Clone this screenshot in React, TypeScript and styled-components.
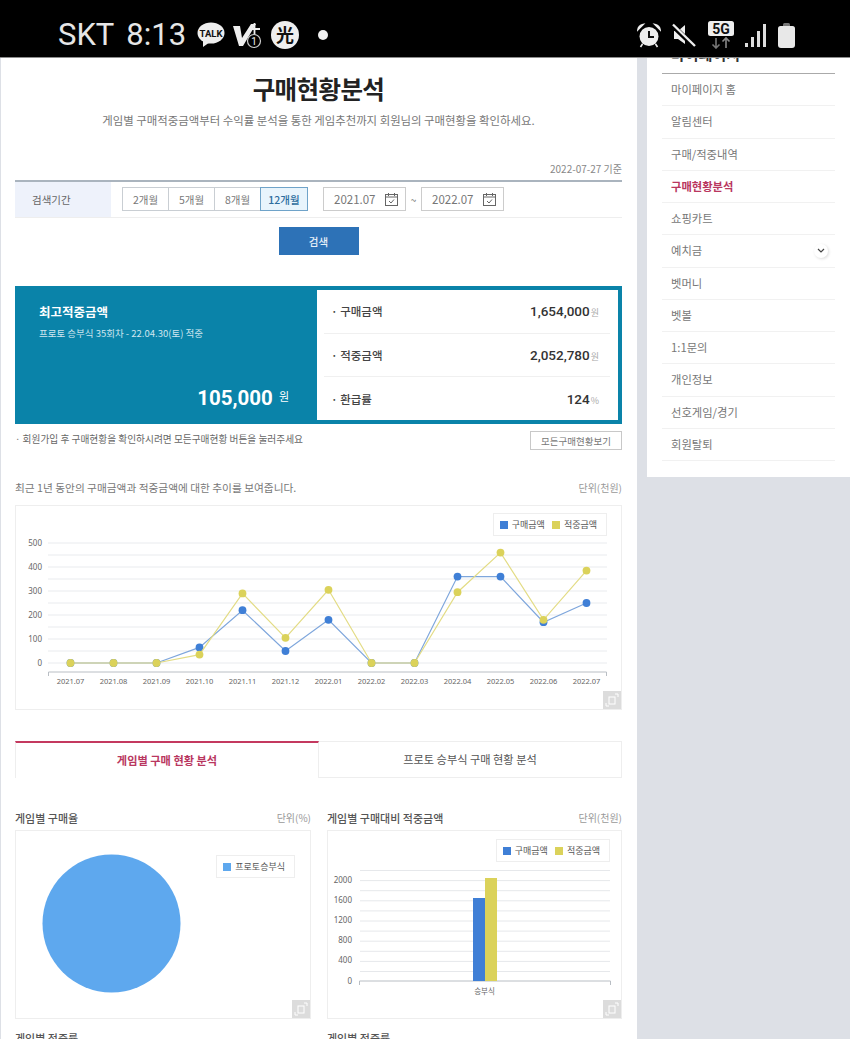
import styled, { createGlobalStyle } from "styled-components";

const GlobalStyle = createGlobalStyle`
    html, body { margin: 0; padding: 0; background: #dde0e6; }
    body { font-family: "Noto Sans CJK KR", "Noto Sans", sans-serif; color: #666; }
    * { box-sizing: border-box; }
`;

const Screen = styled.div`
    width: 850px;
    height: 1039px;
    overflow: hidden;
    background: #dde0e6;
`;

const StatusBar = styled.div`
    position: relative;
    z-index: 2;
    height: 58px;
    background: #000;
    border-bottom: 1px solid #8c8c8c;
    display: flex;
    align-items: center;
    padding: 13px 55px 0 58px;
    color: #e6e6e6;
`;

const StatusText = styled.span<{ $gap: number }>`
    font-family: Roboto, sans-serif;
    font-size: 31px;
    line-height: 36px;
    font-weight: 400;
    margin-right: ${(p) => p.$gap}px;
`;

const IconGroup = styled.div<{ $gap: number }>`
    display: flex;
    align-items: center;
    gap: ${(p) => p.$gap}px;
`;

const Dot = styled.i`
    width: 10px;
    height: 10px;
    border-radius: 50%;
    background: #f0f0f0;
    margin-left: 11px;
`;

const Spacer = styled.div`
    flex: 1;
`;

const Body = styled.div`
    display: flex;
    align-items: flex-start;
`;

const Main = styled.main`
    width: 636px;
    height: 981px;
    margin-left: 1px;
    background: #fff;
    padding: 15px 15px 0 14px;
`;

const Title = styled.h1`
    margin: 0;
    text-align: center;
    font-size: 24.5px;
    line-height: 32px;
    font-weight: 700;
    color: #222;
    letter-spacing: -0.6px;
`;

const Subtitle = styled.p`
    margin: 7px 0 0;
    text-align: center;
    font-size: 11.4px;
    line-height: 16px;
    color: #777;
`;

const BaseDate = styled.div`
    margin-top: 33px;
    text-align: right;
    font-size: 10px;
    line-height: 16px;
    color: #888;
`;

const SearchRow = styled.div`
    margin-top: 3px;
    height: 38px;
    display: flex;
    align-items: center;
    border-top: 2px solid #aab4be;
    border-bottom: 1px solid #eee;
`;

const SearchLabel = styled.div`
    width: 96px;
    height: 100%;
    padding-left: 17px;
    background: #eef2fb;
    font-size: 10.5px;
    line-height: 35px;
    color: #666;
`;

const PeriodGroup = styled.div`
    display: flex;
    margin-left: 12px;
    margin-top: -1px;
    margin-right: 15px;
`;

const PeriodButton = styled.button<{ $active?: boolean }>`
    width: ${(p) => (p.$active ? 48 : 47)}px;
    height: 24px;
    padding: 0;
    margin-left: -1px;
    position: relative;
    border: 1px solid ${(p) => (p.$active ? "#6fa3c9" : "#c9ced3")};
    background: ${(p) => (p.$active ? "#e8f4fc" : "#fff")};
    color: ${(p) => (p.$active ? "#2d6d9e" : "#777")};
    font-family: inherit;
    font-size: 10.5px;
    font-weight: ${(p) => (p.$active ? 500 : 400)};
`;

const DateField = styled.div`
    width: 83px;
    height: 24px;
    margin-top: -1px;
    padding-left: 10px;
    display: flex;
    align-items: center;
    gap: 9px;
    border: 1px solid #ccc;
    font-size: 11.5px;
    color: #777;
`;

const Tilde = styled.span`
    width: 15px;
    text-align: center;
    font-size: 10px;
    color: #777;
`;

const SearchButton = styled.button`
    display: block;
    width: 80px;
    height: 28px;
    margin: 9px auto 0;
    border: none;
    background: #2d72b7;
    color: #e8f0f8;
    font-family: inherit;
    font-size: 10.5px;
    font-weight: 500;
`;

const Highlight = styled.section`
    margin-top: 31px;
    height: 138px;
    display: flex;
    border: 4px solid #0a83a9;
    background: #0a83a9;
`;

const HighlightLeft = styled.div`
    width: 298px;
    padding: 12px 0 0 20px;
    color: #fff;
    display: flex;
    flex-direction: column;
`;

const HighlightTitle = styled.div`
    font-size: 12.5px;
    line-height: 20px;
    font-weight: 700;
`;

const HighlightSub = styled.div`
    margin-top: 3px;
    font-size: 9.5px;
    line-height: 16px;
    color: #cfe6ef;
`;

const HighlightAmount = styled.div`
    margin-top: auto;
    margin-bottom: 7px;
    padding-right: 28px;
    display: flex;
    justify-content: flex-end;
    align-items: center;
    gap: 6px;
    font-family: Roboto, sans-serif;
    font-size: 20.5px;
    line-height: 30px;
    font-weight: 700;
`;

const AmountUnit = styled.span`
    font-family: "Noto Sans CJK KR", sans-serif;
    font-size: 11px;
    font-weight: 400;
    margin-top: -4px;
`;

const HighlightRight = styled.div`
    flex: 1;
    background: #fff;
    padding: 0 8px 0 7px;
    display: flex;
    flex-direction: column;
`;

const StatRow = styled.div`
    flex: 1;
    display: flex;
    align-items: center;
    padding: 0 11px 0 7px;
    border-bottom: 1px solid #f0f0f0;
    &:last-child { border-bottom: none; }
`;

const StatLabel = styled.span`
    flex: 1;
    font-size: 11.5px;
    font-weight: 500;
    color: #444;
`;

const StatValue = styled.span`
    font-family: Roboto, sans-serif;
    font-size: 13.5px;
    font-weight: 500;
    color: #333;
`;

const StatUnit = styled.span`
    margin-left: 1px;
    font-family: "Noto Sans CJK KR", sans-serif;
    font-size: 9px;
    font-weight: 400;
    color: #aaa;
`;

const NoteRow = styled.div`
    margin-top: 7px;
    height: 19px;
    display: flex;
    justify-content: space-between;
    align-items: center;
    font-size: 9.7px;
    color: #666;
`;

const NoteText = styled.span`
    margin-top: -3px;
`;

const OutlineButton = styled.button`
    width: 92px;
    height: 19px;
    padding: 0;
    border: 1px solid #c8c8c8;
    background: #fff;
    font-family: inherit;
    font-size: 9.5px;
    color: #777;
`;

const CaptionRow = styled.div<{ $top: number }>`
    margin-top: ${(p) => p.$top}px;
    height: 16px;
    display: flex;
    justify-content: space-between;
    align-items: center;
    font-size: 10.7px;
    line-height: 16px;
    color: #777;
`;

const ChartTitle = styled.span`
    font-size: 11px;
    font-weight: 500;
    color: #555;
`;

const UnitText = styled.span`
    font-size: 10px;
    color: #999;
`;

const ChartBox = styled.div<{ $height: number; $top?: number }>`
    position: relative;
    height: ${(p) => p.$height}px;
    margin-top: ${(p) => p.$top ?? 0}px;
    border: 1px solid #eee;
    background: #fff;
    & > svg { display: block; }
`;

const Legend = styled.div<{ $top: number; $right: number }>`
    position: absolute;
    top: ${(p) => p.$top}px;
    right: ${(p) => p.$right}px;
    height: 23px;
    padding: 0 9px 0 6px;
    display: flex;
    align-items: center;
    gap: 7px;
    border: 1px solid #eee;
    background: #fff;
    font-size: 9px;
    color: #555;
`;

const LegendItem = styled.span`
    display: flex;
    align-items: center;
    gap: 4px;
`;

const LegendSwatch = styled.i<{ $color: string }>`
    width: 8px;
    height: 8px;
    background: ${(p) => p.$color};
`;

const ZoomButton = styled.div`
    position: absolute;
    right: 0;
    bottom: 0;
    width: 18px;
    height: 18px;
    background: #dcdcdc;
    display: flex;
    align-items: center;
    justify-content: center;
`;

const Tabs = styled.div`
    margin-top: 31px;
    height: 37px;
    display: grid;
    grid-template-columns: 304px 1fr;
`;

const Tab = styled.div<{ $active?: boolean }>`
    display: flex;
    align-items: center;
    justify-content: center;
    padding-bottom: 1px;
    font-size: 11.2px;
    font-weight: ${(p) => (p.$active ? 700 : 400)};
    color: ${(p) => (p.$active ? "#b9375f" : "#555")};
    border: 1px solid #eee;
    border-top: ${(p) => (p.$active ? "2px solid #c4395f" : "1px solid #eee")};
    border-bottom: ${(p) => (p.$active ? "none" : "1px solid #eee")};
    border-left: ${(p) => (p.$active ? "1px solid #eee" : "none")};
`;

const ChartGrid = styled.div`
    margin-top: 32px;
    display: grid;
    grid-template-columns: 296px 295px;
    column-gap: 16px;
`;

const ChartColumn = styled.div`
    display: flex;
    flex-direction: column;
    gap: 4px;
    margin-bottom: 11px;
`;

const Sidebar = styled.aside`
    width: 203px;
    height: 419px;
    margin-left: 10px;
    background: #fff;
    padding: 0 15px;
`;

const SideTitle = styled.div`
    margin-top: -12px;
    height: 28px;
    padding-left: 9px;
    font-size: 15px;
    line-height: 16px;
    font-weight: 700;
    color: #333;
    border-bottom: 1px solid #aaa;
`;

const SideItem = styled.div<{ $active?: boolean }>`
    position: relative;
    height: 32.25px;
    padding: 0 0 1px 9px;
    display: flex;
    align-items: center;
    font-size: 11.3px;
    font-weight: ${(p) => (p.$active ? 700 : 400)};
    color: ${(p) => (p.$active ? "#b9375f" : "#777")};
    border-bottom: 1px solid #f1f1f1;
`;

const Chevron = styled.span`
    position: absolute;
    right: 7px;
    top: 9px;
    width: 14px;
    height: 14px;
    border-radius: 50%;
    background: #fff;
    box-shadow: 1px 1px 3px rgba(0, 0, 0, 0.14);
    display: flex;
    align-items: center;
    justify-content: center;
`;

const BLUE = "#3f7fd6";
const BLUE_LINE = "#7ea6dc";
const YELLOW = "#dbd25a";
const YELLOW_LINE = "#e3dc85";

const months = ["2021.07", "2021.08", "2021.09", "2021.10", "2021.11", "2021.12", "2022.01", "2022.02", "2022.03", "2022.04", "2022.05", "2022.06", "2022.07"];
const buyValues = [0, 0, 0, 65, 220, 50, 180, 0, 0, 360, 360, 170, 250];
const hitValues = [0, 0, 0, 35, 290, 105, 305, 0, 0, 295, 460, 180, 385];
const sideMenu = ["마이페이지 홈", "알림센터", "구매/적중내역", "구매현황분석", "쇼핑카트", "예치금", "벳머니", "벳볼", "1:1문의", "개인정보", "선호게임/경기", "회원탈퇴"];

const lineX = (i: number) => 70.5 + i * 43;
const lineY = (v: number) => 663 - v * 0.24;

function CalendarIcon() {
    return (
        <svg width="13" height="13" viewBox="0 0 13 13" fill="none" stroke="#666" strokeWidth="1">
            <rect x="0.5" y="1.5" width="12" height="11" />
            <path d="M0.5 4h12M3.5 0v3M9.5 0v3M4 8l2 2 3-3.5" />
        </svg>
    );
}

function ZoomIcon() {
    return (
        <ZoomButton>
            <svg width="14" height="14" viewBox="0 0 14 14" fill="none" stroke="#fff" strokeWidth="1">
                <rect x="4" y="4" width="6" height="7" />
                <path d="M10 1h3v3M1 10v3h3" />
            </svg>
        </ZoomButton>
    );
}

function TalkIcon() {
    return (
        <svg width="28" height="26" viewBox="0 0 28 26">
            <ellipse cx="14" cy="11" rx="13.5" ry="10.5" fill="#eee" />
            <path d="M6 17l0 8 7-5z" fill="#eee" />
            <text x="14" y="14.5" textAnchor="middle" fontFamily="Roboto, sans-serif" fontSize="9.5" fontWeight="700" fill="#111">TALK</text>
        </svg>
    );
}

function VPlusIcon() {
    return (
        <svg width="30" height="28" viewBox="0 0 30 28">
            <path d="M0 5h7l2 12L18 3h5L10 25H6z" fill="#eee" />
            <path d="M16 8h11M21.5 2v12" stroke="#eee" strokeWidth="1.8" />
            <circle cx="21" cy="20" r="6.5" fill="#000" stroke="#ccc" strokeWidth="1.2" />
            <text x="21" y="24" textAnchor="middle" fontFamily="Roboto, sans-serif" fontSize="10" fill="#eee">1</text>
        </svg>
    );
}

function LightIcon() {
    return (
        <svg width="28" height="28" viewBox="0 0 28 28">
            <circle cx="14" cy="14" r="14" fill="#eee" />
            <text x="14" y="20.5" textAnchor="middle" fontFamily="'Noto Sans CJK KR', sans-serif" fontSize="18" fontWeight="700" fill="#111">光</text>
        </svg>
    );
}

function AlarmIcon() {
    return (
        <svg width="24" height="25" viewBox="0 0 24 25">
            <circle cx="12" cy="13.5" r="9.5" fill="#eee" />
            <path d="M1 6.5C1.5 3.5 3.5 2 6 1.5zM23 6.5C22.5 3.5 20.5 2 18 1.5zM5.5 21l-2 3M18.5 21l2 3" fill="#eee" stroke="#eee" strokeWidth="1.6" />
            <path d="M12 8v6h5" fill="none" stroke="#111" strokeWidth="2" />
        </svg>
    );
}

function MuteIcon() {
    return (
        <svg width="25" height="25" viewBox="0 0 25 25">
            <path d="M2 8h4l7-6v19l-7-5H2z" fill="#eee" />
            <path d="M1 3l22 21" stroke="#000" strokeWidth="5" />
            <path d="M1 1.5l22 21.5" stroke="#eee" strokeWidth="2.4" />
        </svg>
    );
}

function FiveGIcon() {
    return (
        <svg width="26" height="28" viewBox="0 0 26 28">
            <rect x="0" y="0" width="26" height="15" rx="2.5" fill="#eee" />
            <text x="13" y="12.5" textAnchor="middle" fontFamily="Roboto, sans-serif" fontSize="14" fontWeight="700" fill="#111">5G</text>
            <path d="M8 17v10M4.5 23.5L8 27l3.5-3.5" fill="none" stroke="#777" strokeWidth="1.6" />
            <path d="M18 27V17M14.5 20.5L18 17l3.5 3.5" fill="none" stroke="#888" strokeWidth="1.6" />
        </svg>
    );
}

function SignalIcon() {
    return (
        <svg width="22" height="23" viewBox="0 0 22 23">
            <rect x="0" y="19" width="3" height="4" fill="#ddd" />
            <rect x="6" y="13" width="3" height="10" fill="#ddd" />
            <rect x="12" y="7" width="3" height="16" fill="#ddd" />
            <rect x="18" y="0" width="3" height="23" fill="#ddd" />
        </svg>
    );
}

function BatteryIcon() {
    return (
        <svg width="17" height="25" viewBox="0 0 17 25">
            <path d="M5 3V1.5Q5 0 6.5 0h4Q12 0 12 1.5V3z" fill="#777" />
            <path d="M2.5 3h12Q17 3 17 5.5V22q0 3-3 3H3q-3 0-3-3V5.5Q0 3 2.5 3z" fill="#e8e8e8" />
        </svg>
    );
}

function Polyline({ values, color, line }: { values: number[]; color: string; line: string }) {
    const points = values.map((v, i) => `${lineX(i)},${lineY(v)}`).join(" ");
    return (
        <>
            <polyline points={points} fill="none" stroke={line} strokeWidth="1.2" />
            {values.map((v, i) => (
                <circle key={i} cx={lineX(i)} cy={lineY(v)} r="3.9" fill={color} />
            ))}
        </>
    );
}

function TrendChart() {
    const gridLines = Array.from({ length: 11 }, (_, i) => 543 + i * 12);
    return (
        <svg width="605" height="203" viewBox="16 506 605 203">
            {gridLines.map((y) => (
                <line key={y} x1="48" x2="607" y1={y} y2={y} stroke="#e9ebee" />
            ))}
            {[500, 400, 300, 200, 100, 0].map((v) => (
                <text key={v} x="42" y={lineY(v) + 3} textAnchor="end" fontFamily="'Noto Sans', sans-serif" fontSize="8" fill="#666">{v}</text>
            ))}
            <path d="M48.5 676v-4h558v4" fill="none" stroke="#b9bec4" />
            {months.map((m, i) => (
                <text key={m} x={lineX(i)} y="684" textAnchor="middle" fontFamily="'Noto Sans', sans-serif" fontSize="7.5" fill="#666">{m}</text>
            ))}
            <Polyline values={buyValues} color={BLUE} line={BLUE_LINE} />
            <Polyline values={hitValues} color={YELLOW} line={YELLOW_LINE} />
        </svg>
    );
}

function PieChart() {
    return (
        <svg width="294" height="187" viewBox="16 831 294 187">
            <circle cx="111.5" cy="923.5" r="69" fill="#5ea8ee" />
        </svg>
    );
}

function BarChart() {
    const gridLines = Array.from({ length: 11 }, (_, i) => 870.5 + i * 10.1);
    return (
        <svg width="293" height="187" viewBox="328 831 293 187">
            {gridLines.map((y) => (
                <line key={y} x1="360" x2="610" y1={y} y2={y} stroke="#e6e8eb" />
            ))}
            {[2000, 1600, 1200, 800, 400, 0].map((v, i) => (
                <text key={v} x="352" y={883 + i * 20.1} textAnchor="end" fontFamily="'Noto Sans', sans-serif" fontSize="8" fill="#666">{v}</text>
            ))}
            <path d="M359.5 985v-4h251v4" fill="none" stroke="#b9bec4" />
            <rect x="473" y="898" width="12" height="83" fill={BLUE} />
            <rect x="485" y="878" width="12" height="103" fill={YELLOW} />
            <text x="484.5" y="994" textAnchor="middle" fontFamily="'Noto Sans CJK KR', sans-serif" fontSize="7.5" fill="#666">승부식</text>
        </svg>
    );
}

function AmountLegend({ top, right }: { top: number; right: number }) {
    return (
        <Legend $top={top} $right={right}>
            <LegendItem><LegendSwatch $color={BLUE} />구매금액</LegendItem>
            <LegendItem><LegendSwatch $color={YELLOW} />적중금액</LegendItem>
        </Legend>
    );
}

export default function App() {
    return (
        <Screen>
            <GlobalStyle />
            <StatusBar>
                <StatusText $gap={12}>SKT</StatusText>
                <StatusText $gap={11}>8:13</StatusText>
                <IconGroup $gap={8}>
                    <TalkIcon />
                    <VPlusIcon />
                    <LightIcon />
                    <Dot />
                </IconGroup>
                <Spacer />
                <IconGroup $gap={11}>
                    <AlarmIcon />
                    <MuteIcon />
                    <FiveGIcon />
                    <SignalIcon />
                    <BatteryIcon />
                </IconGroup>
            </StatusBar>
            <Body>
                <Main>
                    <Title>구매현황분석</Title>
                    <Subtitle>게임별 구매적중금액부터 수익률 분석을 통한 게임추천까지 회원님의 구매현황을 확인하세요.</Subtitle>
                    <BaseDate>2022-07-27 기준</BaseDate>
                    <SearchRow>
                        <SearchLabel>검색기간</SearchLabel>
                        <PeriodGroup>
                            <PeriodButton>2개월</PeriodButton>
                            <PeriodButton>5개월</PeriodButton>
                            <PeriodButton>8개월</PeriodButton>
                            <PeriodButton $active>12개월</PeriodButton>
                        </PeriodGroup>
                        <DateField>2021.07 <CalendarIcon /></DateField>
                        <Tilde>~</Tilde>
                        <DateField>2022.07 <CalendarIcon /></DateField>
                    </SearchRow>
                    <SearchButton>검색</SearchButton>
                    <Highlight>
                        <HighlightLeft>
                            <HighlightTitle>최고적중금액</HighlightTitle>
                            <HighlightSub>프로토 승부식 35회차 - 22.04.30(토) 적중</HighlightSub>
                            <HighlightAmount>105,000 <AmountUnit>원</AmountUnit></HighlightAmount>
                        </HighlightLeft>
                        <HighlightRight>
                            <StatRow>
                                <StatLabel>· 구매금액</StatLabel>
                                <StatValue>1,654,000<StatUnit>원</StatUnit></StatValue>
                            </StatRow>
                            <StatRow>
                                <StatLabel>· 적중금액</StatLabel>
                                <StatValue>2,052,780<StatUnit>원</StatUnit></StatValue>
                            </StatRow>
                            <StatRow>
                                <StatLabel>· 환급률</StatLabel>
                                <StatValue>124<StatUnit>%</StatUnit></StatValue>
                            </StatRow>
                        </HighlightRight>
                    </Highlight>
                    <NoteRow>
                        <NoteText>· 회원가입 후 구매현황을 확인하시려면 모든구매현황 버튼을 눌러주세요</NoteText>
                        <OutlineButton>모든구매현황보기</OutlineButton>
                    </NoteRow>
                    <CaptionRow $top={30}>
                        <span>최근 1년 동안의 구매금액과 적중금액에 대한 추이를 보여줍니다.</span>
                        <UnitText>단위(천원)</UnitText>
                    </CaptionRow>
                    <ChartBox $height={205} $top={9}>
                        <TrendChart />
                        <AmountLegend top={7} right={14} />
                        <ZoomIcon />
                    </ChartBox>
                    <Tabs>
                        <Tab $active>게임별 구매 현황 분석</Tab>
                        <Tab>프로토 승부식 구매 현황 분석</Tab>
                    </Tabs>
                    <ChartGrid>
                        <ChartColumn>
                            <CaptionRow $top={0}>
                                <ChartTitle>게임별 구매율</ChartTitle>
                                <UnitText>단위(%)</UnitText>
                            </CaptionRow>
                            <ChartBox $height={189}>
                                <PieChart />
                                <Legend $top={24} $right={15}>
                                    <LegendItem><LegendSwatch $color="#5ea8ee" />프로토승부식</LegendItem>
                                </Legend>
                                <ZoomIcon />
                            </ChartBox>
                        </ChartColumn>
                        <ChartColumn>
                            <CaptionRow $top={0}>
                                <ChartTitle>게임별 구매대비 적중금액</ChartTitle>
                                <UnitText>단위(천원)</UnitText>
                            </CaptionRow>
                            <ChartBox $height={189}>
                                <BarChart />
                                <AmountLegend top={8} right={11} />
                                <ZoomIcon />
                            </ChartBox>
                        </ChartColumn>
                        <ChartColumn>
                            <CaptionRow $top={0}>
                                <ChartTitle>게임별 적중률</ChartTitle>
                            </CaptionRow>
                        </ChartColumn>
                        <ChartColumn>
                            <CaptionRow $top={0}>
                                <ChartTitle>게임별 적중률</ChartTitle>
                            </CaptionRow>
                        </ChartColumn>
                    </ChartGrid>
                </Main>
                <Sidebar>
                    <SideTitle>마이페이지</SideTitle>
                    {sideMenu.map((item) => (
                        <SideItem key={item} $active={item === "구매현황분석"}>
                            {item}
                            {item === "예치금" && (
                                <Chevron>
                                    <svg width="8" height="6" viewBox="0 0 8 6" fill="none" stroke="#444" strokeWidth="1.2">
                                        <path d="M1 1l3 3 3-3" />
                                    </svg>
                                </Chevron>
                            )}
                        </SideItem>
                    ))}
                </Sidebar>
            </Body>
        </Screen>
    );
}
